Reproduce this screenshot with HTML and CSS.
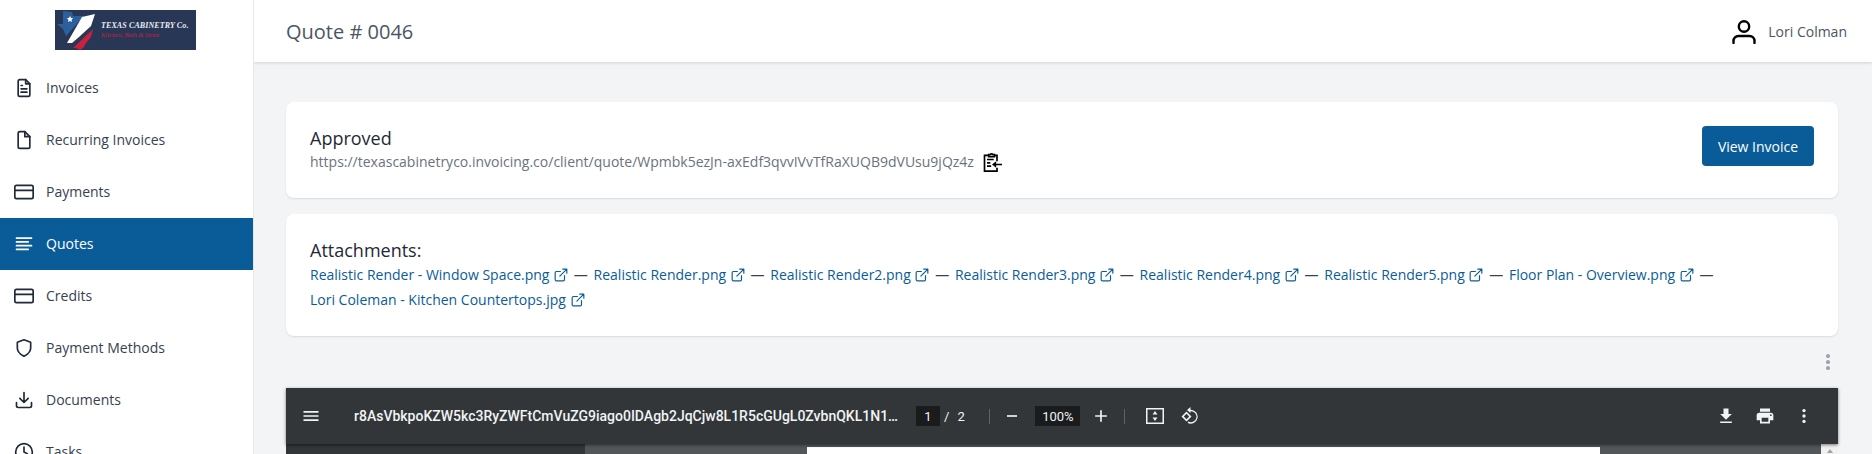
FILE: index.html
```html
<!DOCTYPE html>
<html lang="en">
<head>
<meta charset="utf-8">
<title>Quote # 0046</title>
<link rel="stylesheet" href="styles.css">
</head>
<body>
<div class="app">
  <aside class="sidebar">
    <div class="logo-row">
      <div class="logo">
        <svg class="logo-mark" viewBox="0 0 45 40">
          <polygon points="8,1 17,2 18,6 29,6 11,26 8,19 2,14 8,14" fill="#2b5f9e"/>
          <polygon points="12,33 27,7 40,4 36,16 24,27 17,33" fill="#ffffff"/>
          <polygon points="18,38 38,19 36,27 31,33 29,37 25,40 21,38" fill="#c8203f"/>
          <polygon points="15,6 16,8 18,8 16.500,10 17,12 15,11 13,12 13.500,10 12,8 14,8" fill="#ffffff"/>
        </svg>
        <div class="logo-text">
          <span class="logo-name">TEXAS CABINETRY Co.</span>
          <span class="logo-sub">Kitchen, Bath &amp; Stone</span>
        </div>
      </div>
    </div>
    <nav class="nav">
      <a class="nav-item"><svg class="nav-icon" viewBox="0 0 24 24"><path d="M14 2H7a2 2 0 0 0-2 2v16a2 2 0 0 0 2 2h10a2 2 0 0 0 2-2V7z"/><path d="M14 2v5h5M15.500 13h-7M15.500 17h-7M10 9H8.500"/></svg><span class="nav-label">Invoices</span></a>
      <a class="nav-item"><svg class="nav-icon" viewBox="0 0 24 24"><path d="M13 2H7a2 2 0 0 0-2 2v16a2 2 0 0 0 2 2h10a2 2 0 0 0 2-2V8z"/><path d="M13 2v6h6"/></svg><span class="nav-label">Recurring Invoices</span></a>
      <a class="nav-item"><svg class="nav-icon" viewBox="0 0 24 24"><rect x="1" y="4" width="22" height="16" rx="2"/><path d="M1 10h22"/></svg><span class="nav-label">Payments</span></a>
      <a class="nav-item active"><svg class="nav-icon" viewBox="0 0 24 24"><path d="M3 5h18M3 9.500h14M3 14h18M3 18.500h14"/></svg><span class="nav-label">Quotes</span></a>
      <a class="nav-item"><svg class="nav-icon" viewBox="0 0 24 24"><rect x="1" y="4" width="22" height="16" rx="2"/><path d="M1 10h22"/></svg><span class="nav-label">Credits</span></a>
      <a class="nav-item"><svg class="nav-icon" viewBox="0 0 24 24"><path d="M12 22s8-4 8-10V5l-8-3-8 3v7c0 6 8 10 8 10z"/></svg><span class="nav-label">Payment Methods</span></a>
      <a class="nav-item"><svg class="nav-icon" viewBox="0 0 24 24"><path d="M21 15v4a2 2 0 0 1-2 2H5a2 2 0 0 1-2-2v-4M7 10l5 5 5-5M12 15V3"/></svg><span class="nav-label">Documents</span></a>
      <a class="nav-item"><svg class="nav-icon" viewBox="0 0 24 24"><circle cx="12" cy="12" r="10"/><path d="M12 6v6l4 2"/></svg><span class="nav-label">Tasks</span></a>
    </nav>
  </aside>
  <div class="main">
    <header class="topbar">
      <h1 class="title">Quote # 0046</h1>
      <div class="user">
        <svg class="user-icon" viewBox="0 0 24 24"><circle cx="12" cy="7.500" r="5.200"/><path d="M1.500 24v-2a5 5 0 0 1 5-5h11a5 5 0 0 1 5 5v2"/></svg>
        <span>Lori Colman</span>
      </div>
    </header>
    <div class="content">
      <section class="card card-status">
        <div>
          <div class="card-heading">Approved</div>
          <div class="url-row">
            <span>https://texascabinetryco.invoicing.co/client/quote/Wpmbk5ezJn-axEdf3qvvIVvTfRaXUQB9dVUsu9jQz4z</span>
            <svg class="copy-icon" viewBox="0 0 24 24"><path d="M8 4H3v19h15v-4M18 11V4h-3" fill="none" stroke="#000" stroke-width="2"/><path d="M8 5.500V3h2a2 2 0 0 1 3 0h2v2.500z" fill="none" stroke="#000" stroke-width="2"/><path d="M6 9h8M6 13h4M6 17h5" stroke="#000" stroke-width="2"/><path d="M24 14h-7v-3l-5 4 5 4v-3h7z" fill="#000"/></svg>
          </div>
        </div>
        <button class="btn" type="button">View Invoice</button>
      </section>
      <section class="card">
        <div class="card-heading">Attachments:</div>
        <div class="links">
          <a class="file">Realistic Render - Window Space.png <svg class="ext" viewBox="0 0 24 24"><path d="M18 13v7a2 2 0 0 1-2 2H4a2 2 0 0 1-2-2V8a2 2 0 0 1 2-2h7M15 2h7v7M10 14L22 2"/></svg></a> <span class="dash">—</span>
          <a class="file">Realistic Render.png <svg class="ext" viewBox="0 0 24 24"><path d="M18 13v7a2 2 0 0 1-2 2H4a2 2 0 0 1-2-2V8a2 2 0 0 1 2-2h7M15 2h7v7M10 14L22 2"/></svg></a> <span class="dash">—</span>
          <a class="file">Realistic Render2.png <svg class="ext" viewBox="0 0 24 24"><path d="M18 13v7a2 2 0 0 1-2 2H4a2 2 0 0 1-2-2V8a2 2 0 0 1 2-2h7M15 2h7v7M10 14L22 2"/></svg></a> <span class="dash">—</span>
          <a class="file">Realistic Render3.png <svg class="ext" viewBox="0 0 24 24"><path d="M18 13v7a2 2 0 0 1-2 2H4a2 2 0 0 1-2-2V8a2 2 0 0 1 2-2h7M15 2h7v7M10 14L22 2"/></svg></a> <span class="dash">—</span>
          <a class="file">Realistic Render4.png <svg class="ext" viewBox="0 0 24 24"><path d="M18 13v7a2 2 0 0 1-2 2H4a2 2 0 0 1-2-2V8a2 2 0 0 1 2-2h7M15 2h7v7M10 14L22 2"/></svg></a> <span class="dash">—</span>
          <a class="file">Realistic Render5.png <svg class="ext" viewBox="0 0 24 24"><path d="M18 13v7a2 2 0 0 1-2 2H4a2 2 0 0 1-2-2V8a2 2 0 0 1 2-2h7M15 2h7v7M10 14L22 2"/></svg></a> <span class="dash">—</span>
          <a class="file">Floor Plan - Overview.png <svg class="ext" viewBox="0 0 24 24"><path d="M18 13v7a2 2 0 0 1-2 2H4a2 2 0 0 1-2-2V8a2 2 0 0 1 2-2h7M15 2h7v7M10 14L22 2"/></svg></a> <span class="dash">—</span>
          <a class="file">Lori Coleman - Kitchen Countertops.jpg <svg class="ext" viewBox="0 0 24 24"><path d="M18 13v7a2 2 0 0 1-2 2H4a2 2 0 0 1-2-2V8a2 2 0 0 1 2-2h7M15 2h7v7M10 14L22 2"/></svg></a>
        </div>
      </section>
      <div class="kebab-row">
        <span class="kebab"><i></i><i></i><i></i></span>
      </div>
      <section class="viewer">
        <div class="pdf-bar">
          <div class="pdf-left">
            <svg class="pdf-icon menu-icon" viewBox="0 0 24 24"><path d="M3 6h18v2H3zM3 11h18v2H3zM3 16h18v2H3z"/></svg>
            <span class="pdf-name">r8AsVbkpoKZW5kc3RyZWFtCmVuZG9iago0IDAgb2JqCjw8L1R5cGUgL0ZvbnQKL1N1…</span>
          </div>
          <div class="pdf-center">
            <span class="pdf-box page-box">1</span>
            <span class="pdf-slash">/</span>
            <span class="pdf-total">2</span>
            <span class="pdf-sep sep-page"></span>
            <svg class="pdf-icon" viewBox="0 0 24 24"><path d="M6 11h12v2H6z"/></svg>
            <span class="pdf-box zoom-box">100%</span>
            <svg class="pdf-icon" viewBox="0 0 24 24"><path d="M11 5h2v6h6v2h-6v6h-2v-6H5v-2h6z"/></svg>
            <span class="pdf-sep sep-zoom"></span>
            <svg class="pdf-icon fit" viewBox="0 0 20 18"><path fill-rule="evenodd" d="M1 1h18v16H1zM2.500 2.500v13h15v-13z"/><path d="M10 4l2.500 3.500h-5zM10 14l-2.500-3.500h5z"/></svg>
            <svg class="pdf-icon rotate" viewBox="0 0 20 18"><path d="M10.500 0L7 3l3.500 3V4.200a5.500 5.500 0 1 1-2 10.400l-.9 1.400A7 7 0 1 0 10.500 2.700z"/><path fill-rule="evenodd" d="M6.500 4.500L11.500 9.500l-5 5-5-5zM6.500 6.800L3.800 9.500l2.700 2.700 2.700-2.700z"/></svg>
          </div>
          <div class="pdf-right">
            <svg class="pdf-icon" viewBox="0 0 24 24"><path d="M19 9.500h-4V3H9v6.500H5l7 7zM5 18.500V20.500h14v-2z"/></svg>
            <svg class="pdf-icon" viewBox="0 0 24 24"><path d="M19 8H5a3 3 0 0 0-3 3v6h4v4h12v-4h4v-6a3 3 0 0 0-3-3zm-3 11H8v-5h8zm3-7a1 1 0 1 1 0-2 1 1 0 0 1 0 2zM18 3H6v4h12z"/></svg>
            <svg class="pdf-icon" viewBox="0 0 24 24"><circle cx="12" cy="5.500" r="2"/><circle cx="12" cy="12" r="2"/><circle cx="12" cy="18.500" r="2"/></svg>
          </div>
        </div>
        <div class="pdf-body">
          <div class="pdf-thumbs"></div>
          <div class="pdf-stage"><div class="pdf-page"></div></div>
          <div class="pdf-scroll"><span class="scroll-arrow"></span></div>
        </div>
      </section>
    </div>
  </div>
</div>
</body>
</html>
```
FILE: styles.css
```css
* { box-sizing: border-box; }
html, body { margin: 0; height: 100%; overflow: hidden; }
body {
  font-family: "Open Sans", "Liberation Sans", sans-serif;
  font-size: 14px;
  color: #374151;
  background: #f3f4f6;
}
.app { display: flex; height: 454px; overflow: hidden; }
.sidebar {
  flex: 0 0 254px;
  height: 454px;
  overflow: hidden;
  background: #fff;
  border-right: 1px solid #e5e7eb;
}
.logo-row { height: 62px; padding-top: 10px; padding-left: 55px; }
.logo {
  width: 141px;
  height: 40px;
  background: #293756;
  display: flex;
  align-items: center;
  overflow: hidden;
}
.logo-mark { width: 45px; height: 40px; flex: none; }
.logo-text { display: flex; flex-direction: column; margin-left: 1px; font-family: "Liberation Serif", serif; font-style: italic; white-space: nowrap; }
.logo-name { font-size: 8px; line-height: 9px; font-weight: 700; color: #e8ebf2; letter-spacing: 0.1px; }
.logo-sub { font-size: 6.500px; line-height: 8px; color: #c8203f; margin-top: 1px; }
.nav-item {
  display: flex;
  align-items: center;
  height: 52px;
  padding-left: 14px;
  color: #374151;
  white-space: nowrap;
}
.nav-label { margin-top: -2px; }
.nav-icon {
  width: 20px;
  height: 20px;
  margin-right: 12px;
  flex: none;
  fill: none;
  stroke: #1f2937;
  stroke-width: 2;
  stroke-linecap: round;
  stroke-linejoin: round;
}
.nav-item.active { background: #0a5c99; color: #fff; }
.nav-item.active .nav-icon { stroke: #fff; }
.main { flex: 1; min-width: 0; height: 454px; overflow: hidden; display: flex; flex-direction: column; }
.topbar {
  flex: 0 0 62px;
  background: #fff;
  display: flex;
  align-items: center;
  justify-content: space-between;
  padding: 0 25px 0 32px;
  box-shadow: 0 1px 3px rgba(0, 0, 0, 0.15);
  position: relative;
}
.title { margin: 0; font-size: 20px; font-weight: 400; color: #4b5563; }
.user { display: flex; align-items: center; gap: 12px; color: #4b5563; }
.user-icon { width: 24px; height: 26px; fill: none; stroke: #000; stroke-width: 2.400; stroke-linecap: round; }
.content { padding: 40px 34px 0 32px; }
.card {
  background: #fff;
  border-radius: 8px;
  padding: 24px;
  margin-bottom: 16px;
  box-shadow: 0 1px 2px rgba(0, 0, 0, 0.1);
}
.card-status { display: flex; justify-content: space-between; align-items: flex-start; }
.card-heading { font-size: 18px; line-height: 24px; color: #1f2937; }
.url-row { display: flex; align-items: center; line-height: 24px; color: #6b7280; }
.copy-icon { width: 20px; height: 20px; margin-left: 8px; }
.btn {
  width: 112px;
  height: 40px;
  border: 0;
  border-radius: 4px;
  background: #0a5c99;
  color: #fff;
  font: 14px "Open Sans", "Liberation Sans", sans-serif;
}
.links { line-height: 25px; color: #374151; height: 50px; }
.file { color: #0a5c99; display: inline-block; white-space: nowrap; }
.dash { margin: 0 2.100px; }
.ext {
  width: 14px;
  height: 14px;
  margin-left: 1px;
  vertical-align: -2px;
  fill: none;
  stroke: #0a5c99;
  stroke-width: 2;
  stroke-linecap: round;
  stroke-linejoin: round;
}
.kebab-row { height: 52px; margin-top: -16px; padding: 18px 8px 0 0; display: flex; justify-content: flex-end; }
.kebab { display: flex; flex-direction: column; gap: 2.500px; height: 16px; }
.kebab i { display: block; width: 4px; height: 4px; border-radius: 50%; background: #9ca3af; }
.pdf-bar {
  height: 56px;
  display: flex;
  align-items: center;
  background: #323639;
  color: #f1f3f4;
  font-family: Roboto, "Liberation Sans", sans-serif;
  font-size: 13px;
  box-shadow: 0 1px 3px rgba(0, 0, 0, 0.5);
  position: relative;
}
.pdf-left { flex: 0 0 630px; display: flex; align-items: center; padding-left: 15px; }
.pdf-name { margin-left: 33px; width: 546px; font-size: 14px; font-weight: 500; white-space: nowrap; overflow: hidden; }
.pdf-center { display: flex; align-items: center; }
.pdf-right { margin-left: auto; display: flex; align-items: center; gap: 19px; padding-right: 24px; }
.pdf-icon { width: 20px; height: 20px; fill: #f1f3f4; flex: none; }
.pdf-box { display: inline-flex; align-items: center; justify-content: center; height: 20px; background: #191b1c; }
.page-box { width: 24px; }
.zoom-box { width: 45px; margin: 0 11px 0 13px; }
.pdf-slash { margin-left: 4px; }
.pdf-total { margin-left: 8px; width: 10px; }
.pdf-sep { width: 1px; height: 15px; background: #5f6368; }
.sep-page { margin: 0 12px 0 22px; }
.sep-zoom { margin: 0 20px 0 13px; }
.rotate { margin-left: 15px; }
.pdf-body { display: flex; height: 100px; background: #525659; }
.pdf-thumbs { flex: 0 0 299px; background: #323639; }
.pdf-stage { flex: 1; display: flex; padding-left: 222px; padding-right: 221px; }
.pdf-page { flex: 1; background: #fff; margin-top: 3px; }
.pdf-scroll { flex: 0 0 17px; background: #f1f1f1; display: flex; justify-content: center; padding-top: 5px; }
.scroll-arrow { width: 0; height: 0; border-left: 3.500px solid transparent; border-right: 3.500px solid transparent; border-bottom: 4px solid #a3a3a3; }
```
